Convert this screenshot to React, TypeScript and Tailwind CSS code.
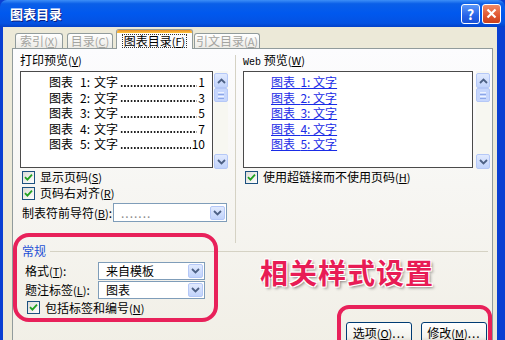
import React from "react";

type Item = { n: string; page: string };

const items: Item[] = [
  { n: "1", page: "1" },
  { n: "2", page: "3" },
  { n: "3", page: "5" },
  { n: "4", page: "7" },
  { n: "5", page: "10" },
];

function Key({ label, k }: { label: string; k: string }) {
  return (
    <span>
      {label}
      <span className="text-[11px]">
        (<span className="underline">{k}</span>)
      </span>
    </span>
  );
}

function Check() {
  return (
    <span className="flex h-[13px] w-[13px] shrink-0 items-center justify-center border border-[#1c5180] bg-[linear-gradient(135deg,#dcdcd7,#ffffff)]">
      <svg width="9" height="9" viewBox="0 0 9 9">
        <path d="M1 4.2 L3.4 6.6 L8 1.6" stroke="#21a121" strokeWidth="1.8" fill="none" />
      </svg>
    </span>
  );
}

function Chevron({ up }: { up?: boolean }) {
  return (
    <svg width="9" height="6" viewBox="0 0 9 6">
      <path
        d={up ? "M1 5 L4.5 1.5 L8 5" : "M1 1 L4.5 4.5 L8 1"}
        stroke="#4d6185"
        strokeWidth="1.8"
        fill="none"
      />
    </svg>
  );
}

function ArrowBtn({ up }: { up?: boolean }) {
  return (
    <div className="flex h-[15px] w-[14px] items-center justify-center rounded-[2px] border border-[#b5c8f7] bg-[linear-gradient(180deg,#e1eafe,#c1d3fb)]">
      <Chevron up={up} />
    </div>
  );
}

function ScrollBar() {
  return (
    <div className="flex h-[98px] w-[14px] flex-col bg-[#f7f7f1] pt-[2px]">
      <ArrowBtn up />
      <div className="flex h-[14px] w-[14px] flex-col items-center justify-center gap-[1px] rounded-[2px] border border-[#b5c8f7] bg-[#c6d6fc]">
        <span className="h-px w-[6px] bg-[#eef3fe]" />
        <span className="h-px w-[6px] bg-[#8ca6e8]" />
        <span className="h-px w-[6px] bg-[#eef3fe]" />
        <span className="h-px w-[6px] bg-[#8ca6e8]" />
      </div>
      <div className="flex-1" />
      <ArrowBtn />
    </div>
  );
}

function Combo({ text, className, dim }: { text: string; className: string; dim?: boolean }) {
  return (
    <div className={"flex h-[18px] items-center border border-[#7f9db9] bg-white " + className}>
      <span className={"flex-1 pl-[7px] leading-[16px] " + (dim ? "text-[#8a8a8a] tracking-[1px]" : "text-black")}>
        {text}
      </span>
      <div className="m-px flex h-[14px] w-[15px] items-center justify-center rounded-[2px] border border-[#b5c8f7] bg-[linear-gradient(180deg,#e1eafe,#c1d3fb)]">
        <Chevron />
      </div>
    </div>
  );
}

function Tab({ label, k, className }: { label: string; k: string; className: string }) {
  return (
    <div
      className={
        "flex h-[15px] items-center justify-center rounded-t-[3px] border border-b-0 border-[#919b9c] bg-[linear-gradient(180deg,#ffffff,#ecebe6)] text-[#a4a4a0] leading-[14px] " +
        className
      }
    >
      <Key label={label} k={k} />
    </div>
  );
}

function TitleBar() {
  return (
    <div className="flex h-[27px] items-center rounded-t-[7px] bg-[linear-gradient(180deg,#3d8ff7_0%,#0a5fe8_14%,#0058ee_50%,#0452e2_86%,#0341c8_100%)] pl-[10px] pr-[4px]">
      <span className="flex-1 text-[13px] font-bold leading-[16px] text-white [text-shadow:1px_1px_0_#0a1e80]">
        图表目录
      </span>
      <div className="flex gap-[2px]">
        <div className="flex h-[20px] w-[19px] items-center justify-center rounded-[3px] border border-white bg-[linear-gradient(180deg,#5b97f8,#2662e8_60%,#1a52d6)] text-[14px] font-bold leading-[14px] text-white">
          ?
        </div>
        <div className="flex h-[20px] w-[19px] items-center justify-center rounded-[3px] border border-white bg-[linear-gradient(180deg,#ef8a66,#e0552f_60%,#c8401d)]">
          <svg width="11" height="11" viewBox="0 0 11 11">
            <path d="M1.5 1.5 L9.5 9.5 M9.5 1.5 L1.5 9.5" stroke="#fff" strokeWidth="2.2" />
          </svg>
        </div>
      </div>
    </div>
  );
}

function XpButton({ label, k }: { label: string; k: string }) {
  return (
    <div className="flex h-[22px] w-[66px] items-center justify-center rounded-[3px] border border-[#003c74] bg-[linear-gradient(180deg,#ffffff,#f3f2ec_70%,#d6d0c5)] leading-[14px]">
      <Key label={label} k={k} />
      <span className="tracking-[1px]">...</span>
    </div>
  );
}

export default function App() {
  return (
    <div className="relative h-[340px] w-[505px] overflow-hidden bg-[#0a3fd2] font-['Noto_Sans_CJK_SC',sans-serif] text-[12px] text-black">
      <TitleBar />
      <div className="ml-[3px] mr-[8px] h-[313px] bg-[#ece9d8]">
        {/* tabs */}
        <div className="flex h-[21px] items-end pl-[12px]">
          <Tab label="索引" k="X" className="w-[48px]" />
          <Tab label="目录" k="C" className="ml-[4px] w-[46px]" />
          <div className="relative z-10 mb-[-1px] ml-[3px] flex h-[20px] w-[77px] flex-col rounded-t-[3px] border border-b-0 border-[#919b9c] bg-[#fcfcfe]">
            <div className="h-[3px] rounded-t-[2px] bg-[linear-gradient(180deg,#e68b2c,#ffc73c)]" />
            <div className="flex flex-1 items-center justify-center">
              <span className="border border-dotted border-[#333] px-[1px] leading-[12px]">
                <Key label="图表目录" k="F" />
              </span>
            </div>
          </div>
          <Tab label="引文目录" k="A" className="ml-[1px] w-[66px]" />
        </div>

        {/* page */}
        <div className="ml-[9px] h-[300px] w-[481px] border border-[#919b9c] bg-[linear-gradient(180deg,#fcfcfe,#f1efe6)] pl-[7px] pr-[2px] pt-[4px]">
          <div className="flex h-[190px]">
            {/* left */}
            <div className="flex w-[208px] flex-col">
              <div className="h-[14px] leading-[14px]">
                <Key label="打印预览" k="V" />
              </div>
              <div className="mt-[4px] flex h-[98px] gap-[1px]">
                <div className="h-[97px] w-[193px] border border-[#4a4a4a] bg-white pl-[28px] pr-[7px] pt-[2px]">
                  {items.map((it) => (
                    <div key={it.n} className="flex h-[15.5px] items-center whitespace-nowrap leading-[15.5px]">
                      <span>图表</span>
                      <span className="ml-[7px]">{it.n}:</span>
                      <span className="ml-[4px]">文字</span>
                      <span className="mb-[3px] ml-[2px] mr-[1px] h-[2px] min-w-0 flex-1 self-end bg-[radial-gradient(circle,#222_0.7px,transparent_1px)] bg-[length:3.3px_2px] bg-repeat-x" />
                      <span>{it.page}</span>
                    </div>
                  ))}
                </div>
                <ScrollBar />
              </div>
              <div className="flex h-[16px] items-center gap-[5px] pl-[2px] leading-[16px]">
                <Check />
                <Key label="显示页码" k="S" />
              </div>
              <div className="flex h-[16px] items-center gap-[5px] pl-[2px] leading-[16px]">
                <Check />
                <Key label="页码右对齐" k="R" />
              </div>
              <div className="mt-[2px] flex h-[19px] items-center pl-[2px]">
                <span className="w-[91px] leading-[14px]">
                  <Key label="制表符前导符" k="B" />:
                </span>
                <Combo text="......." dim className="h-[19px] w-[114px]" />
              </div>
            </div>

            {/* divider */}
            <div className="ml-[7px] mr-[7px] mt-[2px] w-px bg-[#d5d2c4]" />

            {/* right */}
            <div className="flex w-[247px] flex-col">
              <div className="h-[14px] leading-[14px]">
                <span className="font-['Liberation_Mono',monospace] text-[10px]">Web</span>{" "}
                <Key label="预览" k="W" />
              </div>
              <div className="mt-[4px] flex h-[98px] gap-[3px]">
                <div className="h-[97px] w-[230px] border border-[#4a4a4a] bg-white pl-[27px] pt-[2px]">
                  {items.map((it) => (
                    <div key={it.n} className="h-[15.5px] leading-[15.5px] text-[#1a2ce6]">
                      <span className="underline">
                        图表&nbsp;&nbsp;{it.n}:&nbsp;文字
                      </span>
                    </div>
                  ))}
                </div>
                <ScrollBar />
              </div>
              <div className="flex h-[16px] items-center gap-[5px] pl-[2px] leading-[16px]">
                <Check />
                <Key label="使用超链接而不使用页码" k="H" />
              </div>
            </div>
          </div>

          {/* group header */}
          <div className="flex h-[16px] items-center pl-[2px]">
            <span className="leading-[14px] text-[#1f50d6]">常规</span>
            <span className="ml-[4px] mr-[2px] h-px flex-1 bg-[#d5d2c4]" />
          </div>

          <div className="mt-[3px] flex">
            <div className="flex w-[185px] flex-col pl-[5px]">
              <div className="flex h-[18px] items-center">
                <span className="w-[73px] leading-[14px]">
                  <Key label="格式" k="T" />:
                </span>
                <Combo text="来自模板" className="w-[107px]" />
              </div>
              <div className="mt-px flex h-[18px] items-center">
                <span className="w-[73px] leading-[14px]">
                  <Key label="题注标签" k="L" />:
                </span>
                <Combo text="图表" className="w-[107px]" />
              </div>
              <div className="flex h-[17px] items-center gap-[5px] pl-[2px] leading-[16px]">
                <Check />
                <Key label="包括标签和编号" k="N" />
              </div>
            </div>
            <div className="ml-[55px] mt-[-5px] h-[30px] text-[28px] font-bold leading-[30px] tracking-[1px] text-[#e81c55] [text-shadow:-1px_-1px_0_#fff,1px_-1px_0_#fff,-1px_1px_0_#fff,1px_1px_0_#fff,2px_2px_3px_rgba(0,0,0,0.45)]">
              相关样式设置
            </div>
          </div>

          <div className="mr-[3px] mt-[6px] flex justify-end gap-[9px]">
            <XpButton label="选项" k="O" />
            <XpButton label="修改" k="M" />
          </div>
        </div>
      </div>

      {/* annotation rings */}
      <div className="pointer-events-none absolute left-[13px] top-[233px] h-[89px] w-[205px] rounded-[16px] border-4 border-[#e8215a]" />
      <div className="pointer-events-none absolute left-[337px] top-[305px] h-[50px] w-[155px] rounded-[12px] border-4 border-[#e8215a]" />
    </div>
  );
}
